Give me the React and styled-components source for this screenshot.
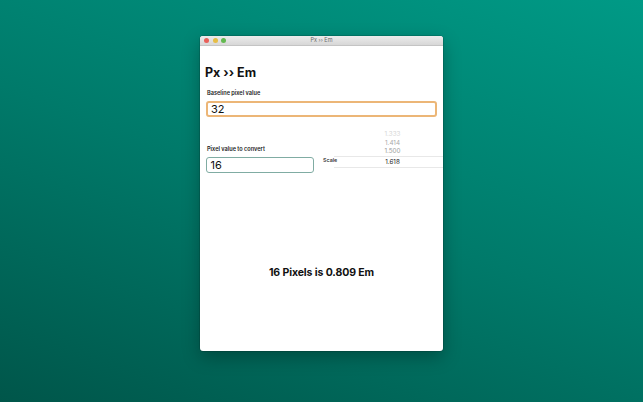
import React from 'react';
import styled, { createGlobalStyle } from 'styled-components';

const GlobalStyle = createGlobalStyle`
	html, body {
		margin: 0;
		padding: 0;
		height: 100%;
	}
	body {
		font-family: Inter, "Noto Sans", sans-serif;
		background: linear-gradient(20deg, #00564a 0%, #007a6a 50%, #009a86 100%);
		overflow: hidden;
	}
	#root {
		height: 100%;
	}
`;

const Desktop = styled.div`
	height: 100%;
	display: flex;
	justify-content: center;
	align-items: flex-start;
	padding-top: 36px;
	box-sizing: border-box;
`;

const Window = styled.div`
	width: 243px;
	height: 315px;
	background: #fff;
	border-radius: 3px;
	overflow: hidden;
	box-shadow: 0 6px 18px rgba(0, 0, 0, 0.28), 0 0 0 0.5px rgba(0, 0, 0, 0.25);
	display: flex;
	flex-direction: column;
`;

const TitleBar = styled.div`
	height: 9px;
	flex: none;
	background: linear-gradient(#ececec, #d7d7d7);
	border-bottom: 0.5px solid #c4c4c4;
	display: flex;
	align-items: center;
	position: relative;
`;

const Lights = styled.div`
	display: flex;
	gap: 3.5px;
	padding-left: 4px;
`;

const Light = styled.span`
	width: 5px;
	height: 5px;
	border-radius: 50%;
	background: ${ ( { $color } ) => $color };
`;

const WindowTitle = styled.div`
	position: absolute;
	left: 0;
	right: 0;
	text-align: center;
	font-size: 5.5px;
	color: #6a6a6a;
	line-height: 9px;
`;

const Content = styled.div`
	flex: 1;
	display: flex;
	flex-direction: column;
	padding: 0 6px 0 6px;
`;

const Heading = styled.h1`
	margin: 20px 0 0 -1px;
	font-size: 12.5px;
	font-weight: 700;
	color: #111;
	line-height: 14px;
`;

const Label = styled.div`
	font-size: 5.6px;
	font-weight: 600;
	color: #1a1a1a;
	margin: ${ ( { $top } ) => $top }px 0 4.5px 1px;
	line-height: 7px;
`;

const Field = styled.div`
	height: 16px;
	box-sizing: border-box;
	width: ${ ( { $width } ) => $width };
	border: ${ ( { $focused } ) => ( $focused ? '2px solid #ecb677' : '1.5px solid #80aca3' ) };
	border-radius: 3px;
	display: flex;
	align-items: center;
	padding-left: ${ ( { $focused } ) => ( $focused ? '3px' : '3.5px' ) };
	font-size: 11px;
	color: #111;
`;

const Row = styled.div`
	display: flex;
	align-items: flex-start;
	margin-top: 13px;
	margin-right: -6px;
`;

const Column = styled.div`
	display: flex;
	flex-direction: column;
`;

const Picker = styled.div`
	flex: 1;
	display: flex;
	align-items: flex-start;
	margin-left: 9px;
`;

const PickerLabel = styled.div`
	font-size: 5.4px;
	font-weight: 500;
	line-height: 7px;
	color: #222;
	width: 11px;
	margin-top: 26.5px;
`;

const Wheel = styled.div`
	flex: 1;
	display: flex;
	flex-direction: column;
	align-items: stretch;
`;

const WheelItem = styled.div`
	height: 8.6px;
	line-height: 8.6px;
	text-align: center;
	padding-left: 8px;
	font-size: 6.3px;
	color: ${ ( { $shade } ) => $shade };
`;

const Selected = styled( WheelItem )`
	height: 10px;
	line-height: 10px;
	border-top: 0.5px solid #e8e8e8;
	border-bottom: 0.5px solid #e8e8e8;
	color: #222;
`;

const Result = styled.div`
	margin-top: 93px;
	text-align: center;
	font-size: 10.5px;
	font-weight: 700;
	color: #111;
	letter-spacing: -0.1px;
`;

export default function App() {
	return (
		<>
			<GlobalStyle />
			<Desktop>
				<Window>
					<TitleBar>
						<Lights>
							<Light $color="#e9605a" />
							<Light $color="#e6bd46" />
							<Light $color="#63b950" />
						</Lights>
						<WindowTitle>Px ›› Em</WindowTitle>
					</TitleBar>
					<Content>
						<Heading>Px ›› Em</Heading>
						<Label $top={ 9.5 }>Baseline pixel value</Label>
						<Field $width="100%" $focused>32</Field>
						<Row>
							<Column>
								<Label $top={ 15.5 }>Pixel value to convert</Label>
								<Field $width="108px">16</Field>
							</Column>
							<Picker>
								<PickerLabel>Scale</PickerLabel>
								<Wheel>
									<WheelItem $shade="#d6d6d6">1.333</WheelItem>
									<WheelItem $shade="#aaaaaa">1.414</WheelItem>
									<WheelItem $shade="#9a9a9a">1.500</WheelItem>
									<Selected>1.618</Selected>
								</Wheel>
							</Picker>
						</Row>
						<Result>16 Pixels is 0.809 Em</Result>
					</Content>
				</Window>
			</Desktop>
		</>
	);
}
